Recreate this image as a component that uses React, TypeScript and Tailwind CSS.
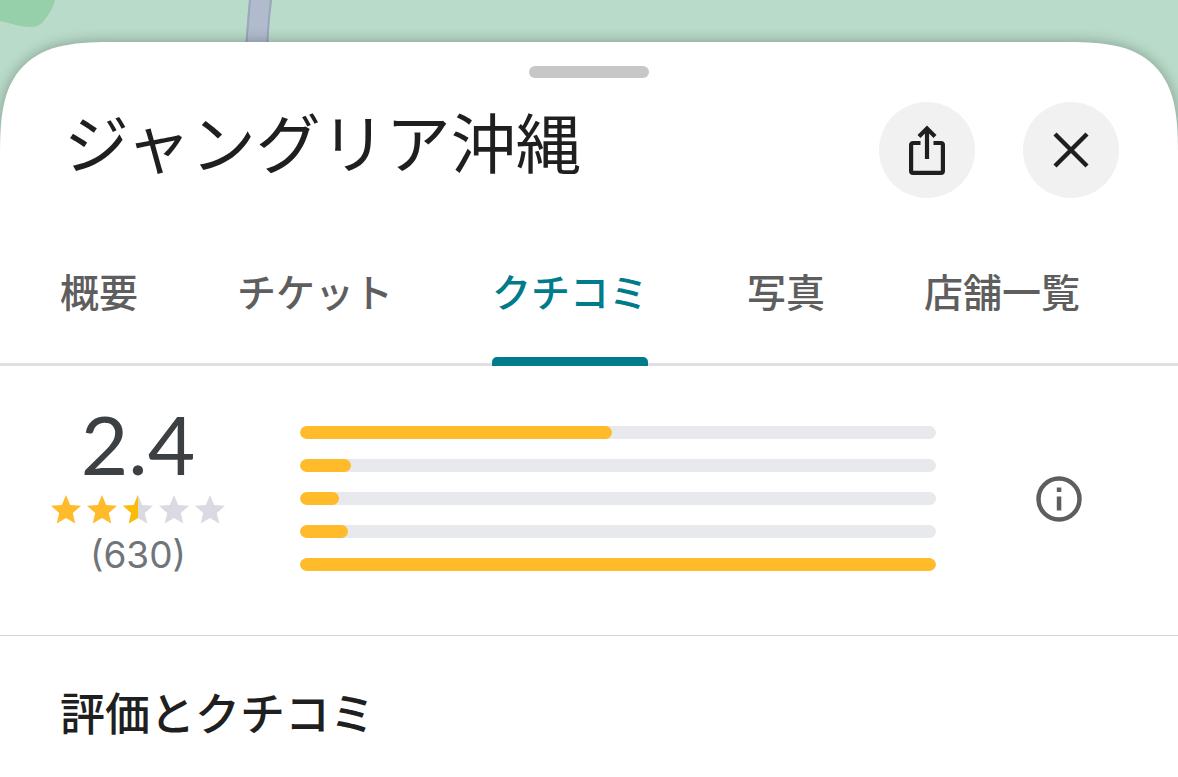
import React, { useState } from "react";

const tabs = ["概要", "チケット", "クチコミ", "写真", "店舗一覧"];

const ratingBars = [
    { stars: 5, percent: 49 },
    { stars: 4, percent: 8 },
    { stars: 3, percent: 6.2 },
    { stars: 2, percent: 7.5 },
    { stars: 1, percent: 100 },
];

const STAR_PATH = "M12 17.27 18.18 21l-1.64-7.03L22 9.24l-7.19-.61L12 2 9.19 8.63 2 9.24l5.46 4.73L5.82 21z";

function MapBackground() {
    return (
        <svg className="absolute top-0 left-0" width="300" height="200" viewBox="0 0 300 200" aria-hidden="true">
            <path d="M0 0H55C54 6 50 12 46 18C42 24 38 27 30 27C20 27 10 23 0 21Z" fill="#95d0ab" />
            <path d="M249 0H272Q269 22 268 50H245Q247 22 249 0Z" fill="#b0bccd" />
            <path d="M250 0Q248 22 246 50M271 0Q268 22 267 50" fill="none" stroke="#9ba6bb" strokeWidth="2" />
        </svg>
    );
}

function ShareIcon() {
    return (
        <svg width="36" height="50" viewBox="0 0 36 50" fill="none" stroke="#1f1f1f" strokeWidth="4.2" aria-hidden="true">
            <path d="M11.5 18H4.1a2 2 0 0 0-2 2v25.900a2 2 0 0 0 2 2h27.800a2 2 0 0 0 2-2V20a2 2 0 0 0-2-2h-7.400" />
            <path d="M18 4v30M10 11.500l8-8 8 8" />
        </svg>
    );
}

function CloseIcon() {
    return (
        <svg width="36" height="36" viewBox="0 0 36 36" fill="none" stroke="#1f1f1f" strokeWidth="4.400" aria-hidden="true">
            <path d="M2 2l32 32M34 2L2 34" />
        </svg>
    );
}

function InfoIcon() {
    return (
        <svg width="46" height="46" viewBox="0 0 46 46" aria-hidden="true">
            <circle cx="23" cy="23" r="20.500" fill="none" stroke="#5e5e5e" strokeWidth="4.500" />
            <path d="M20.800 11.500h4.500v4.500h-4.500zM20.800 20.500h4.500v14h-4.500z" fill="#5e5e5e" />
        </svg>
    );
}

function Star({ fill }: { fill: "full" | "half" | "empty" }) {
    return (
        <svg width="36" height="36" viewBox="0 0 24 24" aria-hidden="true">
            <path d={STAR_PATH} fill={fill === "full" ? "#ffbb29" : "#dadae2"} />
            {fill === "half" && <path d="M12 2v15.270L5.820 21l1.640-7.030L2 9.240l7.190-.610z" fill="#fbbc04" />}
        </svg>
    );
}

export default function App() {
    const [activeTab, setActiveTab] = useState<string>("クチコミ");

    return (
        <div className="relative flex min-h-screen flex-col overflow-hidden bg-[#b9dbc9] pt-[42px] font-['Noto_Sans_CJK_JP',sans-serif] text-[#1f1f1f]">
            <MapBackground />
            <main className="relative flex-1 rounded-t-[116px] bg-white pt-6 shadow-[0_0_14px_rgba(0,0,0,0.3)] [corner-shape:superellipse(1.6)]">
                <div className="mx-auto h-3 w-[120px] rounded-full bg-[#c7c7c7]" />

                <header className="mt-6 flex items-center justify-between pr-[59px] pl-16">
                    <h1 className="pb-5 text-[65px] leading-[76px] font-normal">ジャングリア沖縄</h1>
                    <div className="flex gap-12">
                        <button type="button" aria-label="共有" className="flex size-24 items-center justify-center rounded-full bg-[#f1f1f1]">
                            <ShareIcon />
                        </button>
                        <button type="button" aria-label="閉じる" className="flex size-24 items-center justify-center rounded-full bg-[#f1f1f1]">
                            <CloseIcon />
                        </button>
                    </div>
                </header>

                <nav className="mt-16 border-b-[3px] border-[#e0e0e0]">
                    <div role="tablist" className="-mb-[3px] flex justify-between pr-[98px] pl-[60px]">
                        {tabs.map((tab) => (
                            <button
                                key={tab}
                                type="button"
                                role="tab"
                                aria-selected={activeTab === tab}
                                onClick={() => setActiveTab(tab)}
                                className={`flex flex-col text-[39px] leading-[56px] font-medium ${activeTab === tab ? "text-[#007b8b]" : "text-[#5e5e5e]"}`}
                            >
                                {tab}
                                <span className={`mt-[39px] h-[9px] w-full rounded-t-[5px] ${activeTab === tab ? "bg-[#007b8b]" : ""}`} />
                            </button>
                        ))}
                    </div>
                </nav>

                <section className="flex items-start border-b border-[#d5d5d5] pt-9 pb-[58px]">
                    <div className="flex w-[300px] flex-col pr-6 font-['Inter',sans-serif]">
                        <p className="text-center font-['Lato',sans-serif] text-[82px] leading-[82px] text-[#3c4043]">2.4</p>
                        <div role="img" aria-label="星 2.4" className="mt-2 flex justify-center">
                            <Star fill="full" />
                            <Star fill="full" />
                            <Star fill="half" />
                            <Star fill="empty" />
                            <Star fill="empty" />
                        </div>
                        <p className="mt-[5px] text-center text-[37px] leading-[44px] text-[#70757a]">(630)</p>
                    </div>
                    <div className="flex flex-1 flex-col gap-5 pt-6">
                        {ratingBars.map((bar) => (
                            <div key={bar.stars} className="h-[13px] overflow-hidden rounded-full bg-[#e8e9ed]">
                                <div className="h-full rounded-full bg-[#ffbb29]" style={{ width: `${bar.percent}%` }} />
                            </div>
                        ))}
                    </div>
                    <div className="flex w-[242px] justify-center pt-[74px] pl-1">
                        <button type="button" aria-label="クチコミについて">
                            <InfoIcon />
                        </button>
                    </div>
                </section>

                <h2 className="mt-11 pl-[60px] text-[45px] leading-[64px] font-medium">評価とクチコミ</h2>
            </main>
        </div>
    );
}
